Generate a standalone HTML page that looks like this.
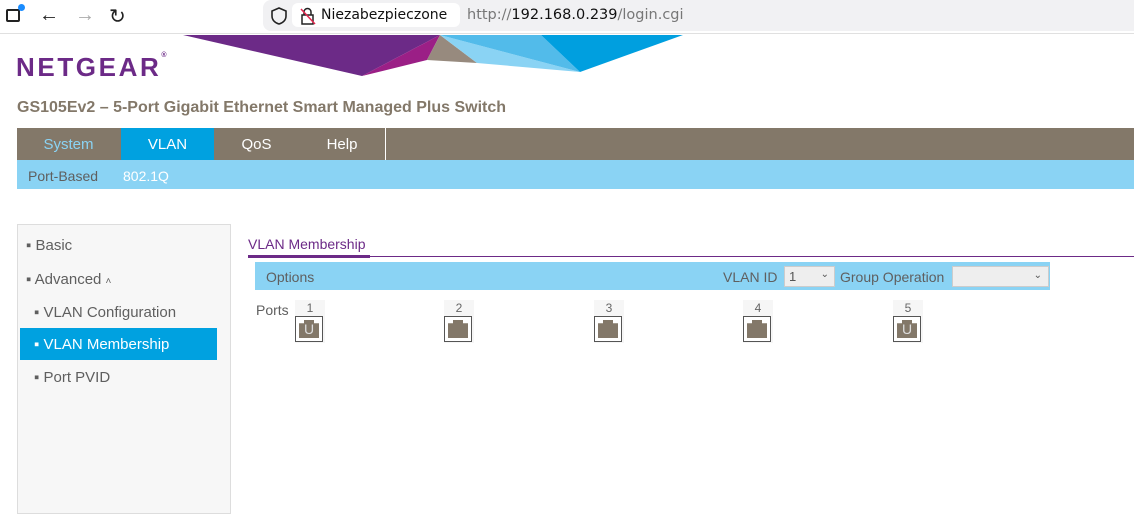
<!DOCTYPE html>
<html><head><meta charset="utf-8"><style>
*{margin:0;padding:0;box-sizing:border-box}
body{width:1134px;height:507px;overflow:hidden;background:#fff;font-family:"Liberation Sans",sans-serif;position:relative}
.abs{position:absolute}
.nav div{position:absolute;top:128px;height:32px;line-height:33px;text-align:center;font-size:15px;color:#fff;background:#837869}
.side div{position:absolute;left:20px;width:197px;height:32px;line-height:33px;font-size:15px;color:#5f5f5f}
.port{position:absolute;top:300px;width:30px;height:43px;background:#f6f6f6}
.port span{position:absolute;top:1px;left:0;width:30px;text-align:center;font-size:12px;color:#666}
.port i{position:absolute;left:0;top:16px;width:28px;height:26px;border:1px solid #555;background:#fff}
.port b{position:absolute;left:3px;top:3px;width:20px;height:18px;background:#837869;clip-path:polygon(25% 0,75% 0,75% 18%,100% 18%,100% 100%,0 100%,0 18%,25% 18%)}
.port em{position:absolute;left:0;top:4px;width:26px;text-align:center;font-style:normal;font-size:14px;color:#ddd}
</style></head><body>
<div class="abs" style="left:0;top:0;width:1134px;height:34px;background:#fff;border-bottom:1px solid #e0e0e0"></div>
<div class="abs" style="left:6px;top:9px;width:14px;height:13px;border:2px solid #222;border-radius:2px"></div>
<div class="abs" style="left:18px;top:4px;width:7px;height:7px;border-radius:50%;background:#1a8cff"></div>
<div class="abs" style="left:39px;top:4px;font-size:20px;color:#222">←</div>
<div class="abs" style="left:75px;top:4px;font-size:20px;color:#aaa">→</div>
<div class="abs" style="left:109px;top:4px;font-size:20px;color:#222">↻</div>
<div class="abs" style="left:263px;top:0;width:871px;height:31px;background:#f1f1f3;border-radius:8px 0 0 8px"></div>
<svg class="abs" style="left:270px;top:6px" width="18" height="20"><path d="M9 2 L16 5 V10 C16 14 13 17 9 18 C5 17 2 14 2 10 V5 Z" fill="none" stroke="#222" stroke-width="1.6"/></svg>
<div class="abs" style="left:292px;top:3px;width:168px;height:24px;background:#fff;border-radius:6px"></div>
<svg class="abs" style="left:299px;top:6px" width="18" height="20"><rect x="3" y="9" width="11" height="9" fill="none" stroke="#222" stroke-width="1.5"/><path d="M5 9 V6 a3.5 3.5 0 0 1 7 0 V9" fill="none" stroke="#222" stroke-width="1.5"/><path d="M2 3 L16 18" stroke="#e22850" stroke-width="1.5"/></svg>
<div class="abs" style="left:321px;top:7px;color:#111;font-family:'DejaVu Sans',sans-serif;font-size:14px">Niezabezpieczone</div>
<div class="abs" style="left:467px;top:7px;color:#777;font-family:'DejaVu Sans',sans-serif;font-size:14.5px">http://<span style="color:#111">192.168.0.239</span>/login.cgi</div>
<svg class="abs" style="left:0;top:0" width="1134" height="90">
<polygon points="183,35 440,35 362,76" fill="#6c2a87"/>
<polygon points="440,35 362,76 427,60" fill="#9b1f86"/>
<polygon points="440,35 427,60 477,63" fill="#978a7e"/>
<polygon points="440,35 477,63 580,72" fill="#8ad3f4"/>
<polygon points="440,35 580,72 541,35" fill="#52bbea"/>
<polygon points="541,35 683,35 580,72" fill="#009fdf"/>
</svg>
<div class="abs" style="left:16px;top:52px;font-size:26px;font-weight:bold;color:#6c2a87;letter-spacing:2.6px">NETGEAR<sup style="font-size:7px;vertical-align:top">®</sup></div>
<div class="abs" style="left:17px;top:99px;font-size:16px;font-weight:bold;color:#837869">GS105Ev2 – 5-Port Gigabit Ethernet Smart Managed Plus Switch</div>
<div class="abs" style="left:17px;top:128px;width:1117px;height:32px;background:#837869"></div>
<div class="nav">
<div style="left:17px;width:103px;color:#8ad3f4">System</div>
<div style="left:121px;width:93px;background:#00a1e0">VLAN</div>
<div style="left:215px;width:83px">QoS</div>
<div style="left:300px;width:84px">Help</div>
<div style="left:385px;width:1px;background:#fff"></div>
</div>
<div class="abs" style="left:17px;top:160px;width:1117px;height:29px;background:#8ad3f4"></div>
<div class="abs" style="left:28px;top:168px;font-size:14px;color:#5f5f5f">Port-Based</div>
<div class="abs" style="left:123px;top:168px;font-size:14px;color:#fff">802.1Q</div>
<div class="abs" style="left:17px;top:224px;width:214px;height:290px;background:#f7f7f7;border:1px solid #ddd"></div>
<div class="side">
<div style="top:229px;left:26px">▪ Basic</div>
<div style="top:263px;left:26px">▪ Advanced <span style="font-size:10px">˄</span></div>
<div style="top:296px;left:34px">▪ VLAN Configuration</div>
<div style="top:328px;background:#00a1e0;color:#fff;padding-left:14px">▪ VLAN Membership</div>
<div style="top:361px;left:34px">▪ Port PVID</div>
</div>
<div class="abs" style="left:248px;top:236px;font-size:14px;color:#6c2a87">VLAN Membership</div>
<div class="abs" style="left:248px;top:256px;width:886px;height:1px;background:#6c2a87"></div>
<div class="abs" style="left:248px;top:255px;width:122px;height:3px;background:#6c2a87"></div>
<div class="abs" style="left:255px;top:262px;width:795px;height:28px;background:#8ad3f4"></div>
<div class="abs" style="left:266px;top:269px;font-size:14px;color:#5f5f5f">Options</div>
<div class="abs" style="left:723px;top:269px;font-size:14px;color:#5f5f5f">VLAN ID</div>
<div class="abs" style="left:784px;top:266px;width:51px;height:21px;background:#eee;border:1px solid #ccc;font-size:13px;color:#555;padding:2px 4px">1<span style="position:absolute;right:5px;font-size:10px">⌄</span></div>
<div class="abs" style="left:840px;top:269px;font-size:14px;color:#5f5f5f">Group Operation</div>
<div class="abs" style="left:952px;top:266px;width:97px;height:21px;background:#eee;border:1px solid #ccc;font-size:10px;color:#555"><span style="position:absolute;right:6px;top:3px">⌄</span></div>
<div class="abs" style="left:256px;top:302px;font-size:14px;color:#5f5f5f">Ports</div>
<div class="port" style="left:295px"><span>1</span><i><b></b><em>U</em></i></div>
<div class="port" style="left:444px"><span>2</span><i><b></b></i></div>
<div class="port" style="left:594px"><span>3</span><i><b></b></i></div>
<div class="port" style="left:743px"><span>4</span><i><b></b></i></div>
<div class="port" style="left:893px"><span>5</span><i><b></b><em>U</em></i></div>
</body></html>
